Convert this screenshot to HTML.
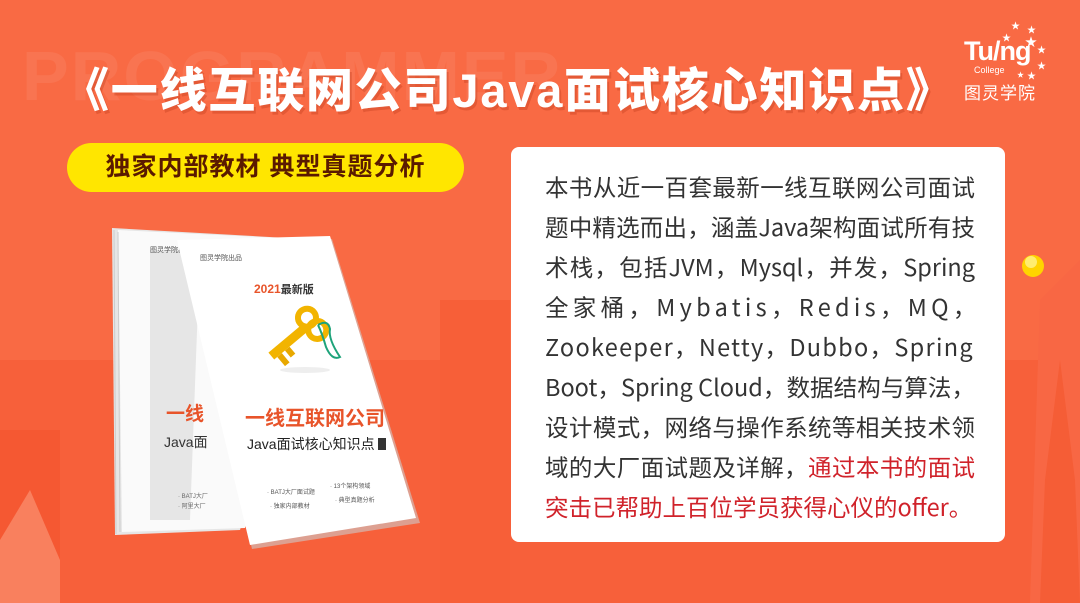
<!DOCTYPE html>
<html><head><meta charset="utf-8"><style>
*{margin:0;padding:0;box-sizing:border-box}
body{width:1080px;height:603px;overflow:hidden;position:relative;background:#f96a44;font-family:"Liberation Sans","Noto Sans CJK SC",sans-serif}
.bg{position:absolute;inset:0}
.title{position:absolute;left:62px;top:52px;width:890px;font-size:47px;font-weight:900;color:#fff;white-space:nowrap;letter-spacing:1.8px;text-shadow:2px 3px 0 rgba(180,50,20,.3)}
.ghost{position:absolute;left:22px;top:36px;font-size:70px;color:rgba(255,255,255,.07);font-weight:700;letter-spacing:2px}
.pill{position:absolute;left:67px;top:143px;width:397px;height:49px;border-radius:25px;background:#ffe600;color:#5a1a00;font-size:25px;font-weight:700;text-align:center;line-height:49px;letter-spacing:1px}
.card{position:absolute;left:511px;top:147px;width:494px;height:395px;background:#fff;border-radius:8px}
.txt{position:absolute;left:545px;top:166px;width:430px;font-size:23.5px;color:#333;font-family:"Noto Sans CJK SC","Liberation Sans",sans-serif}
.txt div{height:40px;line-height:40px;text-align:justify;text-align-last:justify;white-space:nowrap}
.txt div.last{text-align-last:left}
.r{color:#d0222a}
.logo{position:absolute;left:964px;top:30px;color:#fff}
</style></head><body>
<svg class="bg" width="1080" height="603">
<rect x="0" y="360" width="1080" height="243" fill="#f7603a"/>
<rect x="0" y="430" width="60" height="173" fill="#f55832"/>
<rect x="440" y="300" width="70" height="303" fill="#f75f38"/>
<polygon points="1040,300 1080,260 1080,603 1030,603" fill="#f86744"/>
<polygon points="1045,480 1060,360 1075,480 1080,603 1040,603" fill="#f55d36"/>
<polygon points="0,540 30,490 60,560 60,603 0,603" fill="#f9805e"/>
<circle cx="1033" cy="266" r="11" fill="#ffd400"/><circle cx="1031" cy="262" r="6" fill="#fff8a0" opacity=".7"/>
<polygon points="112,228 322,240 240,530 115,535" fill="#e6e6e6"/>
<polygon points="118,230 322,240 245,528 122,532" fill="#fafafa"/>
<polygon points="150,250 200,250 190,520 150,520" fill="#d8d8d8" opacity=".6"/>
<line x1="114" y1="230" x2="116" y2="534" stroke="#ccc"/>
<line x1="118" y1="232" x2="120" y2="532" stroke="#ccc"/>
<text x="150" y="252" font-size="7" fill="#555">图灵学院出品</text>
<text x="166" y="420" font-size="19" fill="#e8542a" font-weight="700">一线</text>
<text x="164" y="447" font-size="14" fill="#333">Java面</text>
<text x="178" y="498" font-size="6" fill="#666">· BATJ大厂</text>
<text x="178" y="508" font-size="6" fill="#666">· 阿里大厂</text>
<polygon points="177,240 330,236 418,520 250,546" fill="#ccc" transform="translate(2,3)" opacity=".6"/>
<polygon points="177,240 330,236 416,518 250,545" fill="#fff"/>
<text x="200" y="260" font-size="7" fill="#555">图灵学院出品</text>
<text x="254" y="293" font-size="12" font-weight="700" fill="#e8542a">2021<tspan fill="#333" font-size="11">最新版</tspan></text>
<g transform="translate(262,345) rotate(-40)">
<rect x="0" y="10" width="44" height="9" fill="#f2b400"/>
<rect x="4" y="19" width="6" height="12" fill="#e8a800"/><rect x="14" y="19" width="6" height="9" fill="#e8a800"/>
<circle cx="52" cy="8" r="9" fill="none" stroke="#f2b400" stroke-width="6"/>
<circle cx="52" cy="24" r="9" fill="none" stroke="#f2b400" stroke-width="6"/>
</g>
<path d="M318 325 q10 -6 12 4 q-2 10 10 28 q-8 4 -14 -10 q-4 -14 -8 -22" fill="none" stroke="#1ea37a" stroke-width="2"/>
<ellipse cx="305" cy="370" rx="25" ry="3" fill="#eee"/>
<text x="245" y="425" font-size="20" font-weight="700" fill="#e8542a">一线互联网公司</text>
<text x="247" y="449" font-size="14" fill="#222">Java面试核心知识点</text>
<rect x="378" y="438" width="8" height="12" fill="#333"/>
<text x="267" y="494" font-size="6" fill="#555">· BATJ大厂面试题</text>
<text x="330" y="488" font-size="6" fill="#555">· 13个架构领域</text>
<text x="270" y="508" font-size="6" fill="#555">· 独家内部教材</text>
<text x="335" y="502" font-size="6" fill="#555">· 典型真题分析</text>
</svg>
<div class="ghost">PROGRAMMER</div>
<div class="title">《一线互联网公司Java面试核心知识点》</div>
<div class="pill">独家内部教材 典型真题分析</div>
<div class="card"></div>
<div class="txt">
<div>本书从近一百套最新一线互联网公司面试</div>
<div>题中精选而出，涵盖Java架构面试所有技</div>
<div>术栈，包括JVM，Mysql，并发，Spring</div>
<div class="last" style="letter-spacing:4.3px">全家桶，Mybatis，Redis，MQ，</div>
<div class="last" style="letter-spacing:1.3px">Zookeeper，Netty，Dubbo，Spring</div>
<div>Boot，Spring Cloud，数据结构与算法，</div>
<div>设计模式，网络与操作系统等相关技术领</div>
<div>域的大厂面试题及详解，<span class="r">通过本书的面试</span></div>
<div class="last r">突击已帮助上百位学员获得心仪的offer。</div>
</div>
<div class="logo">
<div style="font-size:27px;font-weight:700;letter-spacing:-1px;line-height:27px;margin-top:8px">Tu/ng</div>
<div style="font-size:9px;margin-left:10px;line-height:10px">College</div>
<div style="font-size:17px;margin-top:4px;letter-spacing:1px">图灵学院</div>
</div>
<div style="position:absolute;left:1005px;top:20px;color:#fff;font-size:9px;line-height:12px">
<span style="position:absolute;left:6px;top:0">★</span><span style="position:absolute;left:22px;top:4px">★</span>
<span style="position:absolute;left:-3px;top:12px">★</span><span style="position:absolute;left:20px;top:16px;font-size:12px">★</span>
<span style="position:absolute;left:32px;top:24px">★</span><span style="position:absolute;left:32px;top:40px">★</span>
<span style="position:absolute;left:22px;top:50px">★</span><span style="position:absolute;left:12px;top:50px;font-size:7px">★</span>
</div>
</body></html>
